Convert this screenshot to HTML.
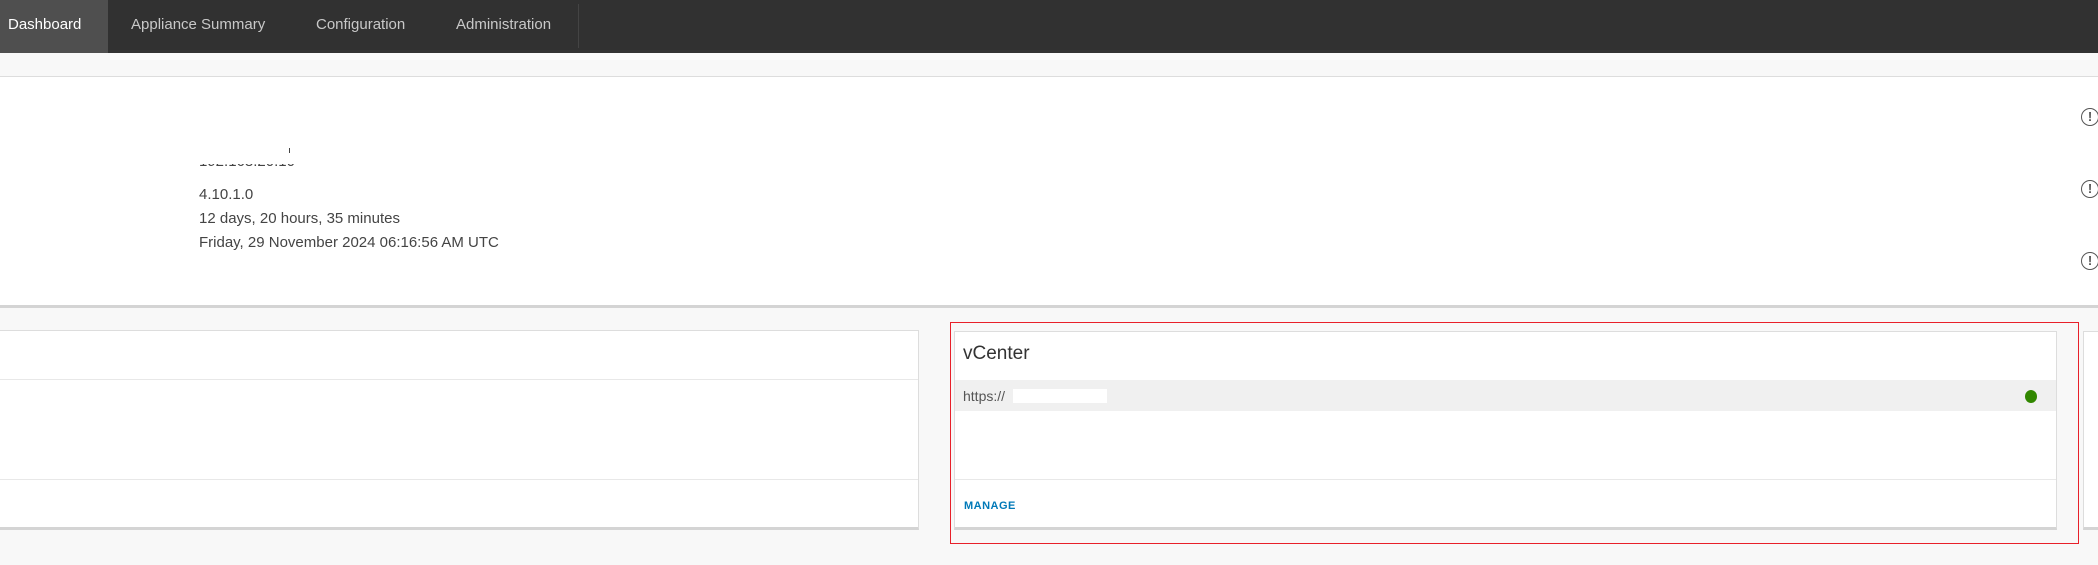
<!DOCTYPE html>
<html><head><style>
body{margin:0;width:2098px;height:565px;background:#f8f8f8;font-family:"Liberation Sans",sans-serif;position:relative;overflow:hidden}
.a{position:absolute}
.nav{left:0;top:0;width:2098px;height:53px;background:#313131}
.tab{top:0;height:53px;line-height:49px;color:#c8c8c8;font-size:15px}
.card{background:#fff;border:1px solid #ddd;border-bottom:3px solid #d4d4d4;box-sizing:border-box}
.ln{font-size:15px;color:#444;left:199px}
.ic{width:16px;height:16px;border:1.5px solid #555;border-radius:50%;left:2081px;font-size:13px;font-weight:bold;color:#555;text-align:center;line-height:16px}
</style></head><body>
<div class="a nav"></div>
<div class="a tab" style="left:0;width:108px;background:#4f4f4f"></div>
<div class="a tab" style="left:8px;color:#fff">Dashboard</div>
<div class="a tab" style="left:131px">Appliance Summary</div>
<div class="a tab" style="left:316px">Configuration</div>
<div class="a tab" style="left:456px">Administration</div>
<div class="a" style="left:578px;top:4px;width:1px;height:44px;background:#444"></div>
<div class="a" style="left:0;top:53px;width:2098px;height:23px;background:#f8f8f8;border-bottom:1px solid #ddd"></div>
<div class="a" style="left:0;top:77px;width:2098px;height:228px;background:#fff;border-bottom:3px solid #d4d4d4"></div>
<div class="a" style="left:289px;top:148px;width:1px;height:5px;background:#444"></div>
<div class="a" style="left:199px;top:164px;width:300px;height:6px;overflow:hidden"><div class="a ln" style="left:0;top:-11px">192.168.20.10</div></div>
<div class="a ln" style="top:186px">4.10.1.0</div>
<div class="a ln" style="top:210px">12 days, 20 hours, 35 minutes</div>
<div class="a ln" style="top:234px">Friday, 29 November 2024 06:16:56 AM UTC</div>
<div class="a ic" style="top:108px">!</div>
<div class="a ic" style="top:180px">!</div>
<div class="a ic" style="top:252px">!</div>
<div class="a card" style="left:-2px;top:330px;width:921px;height:200px"></div>
<div class="a" style="left:0;top:379px;width:918px;height:1px;background:#e8e8e8"></div>
<div class="a" style="left:0;top:479px;width:918px;height:1px;background:#e8e8e8"></div>
<div class="a card" style="left:954px;top:331px;width:1103px;height:199px"></div>
<div class="a" style="left:963px;top:343px;font-size:19px;color:#333">vCenter</div>
<div class="a" style="left:955px;top:380px;width:1101px;height:31px;background:#f0f0f0"></div>
<div class="a" style="left:963px;top:388px;font-size:14px;color:#555">https://</div>
<div class="a" style="left:1013px;top:389px;width:94px;height:14px;background:#fff"></div>
<div class="a" style="left:2025px;top:390px;width:12px;height:13px;border-radius:50%;background:#318700"></div>
<div class="a" style="left:955px;top:479px;width:1101px;height:1px;background:#e8e8e8"></div>
<div class="a" style="left:964px;top:500px;font-size:11px;font-weight:bold;color:#0079b8;letter-spacing:.5px">MANAGE</div>
<div class="a card" style="left:2083px;top:331px;width:30px;height:199px"></div>
<div class="a" style="left:950px;top:322px;width:1127px;height:220px;border:1px solid #e8202a"></div>
</body></html>
